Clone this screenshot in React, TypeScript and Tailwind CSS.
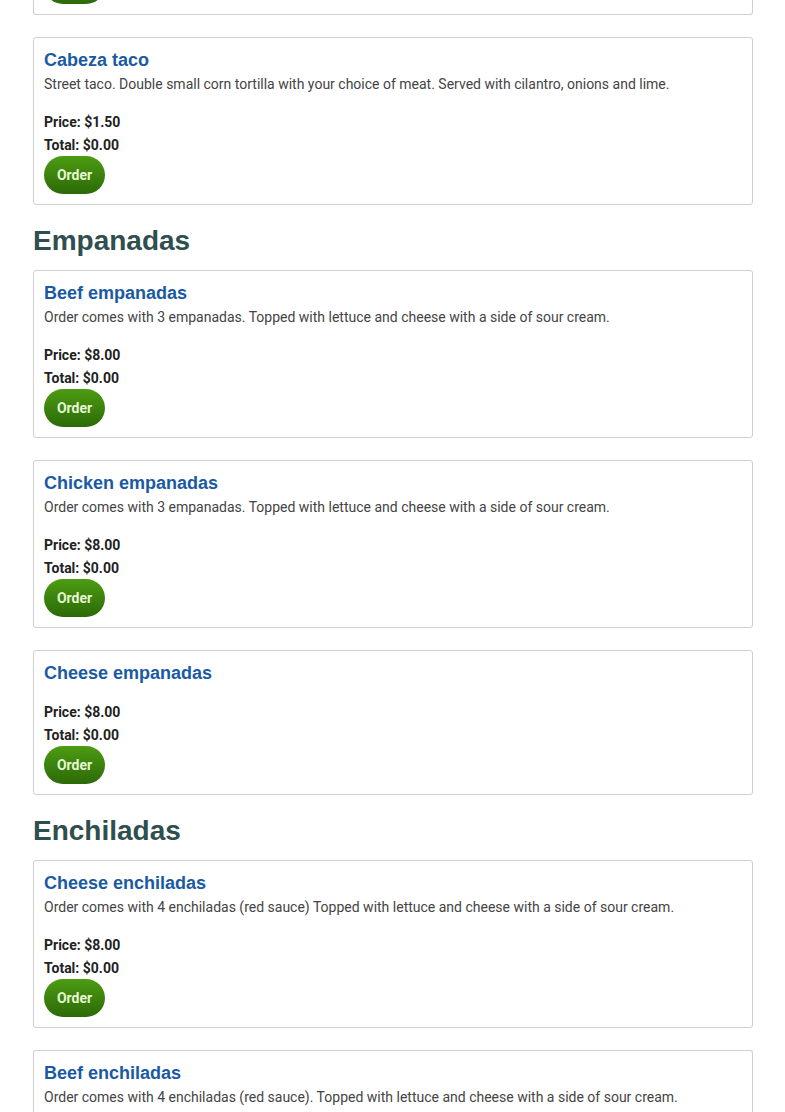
import React from "react";

type Item = { name: string; desc?: string; price: string };

function Card({ item, partial = false }: { item: Item; partial?: boolean }) {
  return (
    <div
      className={
        partial
          ? "rounded-t-[3px] border-x border-t border-[#cfcfcf] bg-white px-[10px] pb-[20px] pt-[11px]"
          : "mb-[22px] rounded-[3px] border border-[#cfcfcf] bg-white px-[10px] pb-[10px] pt-[11px]"
      }
    >
      <h3 className="text-[18px] font-bold leading-[23px] text-[#1a5aa3] [font-family:'Liberation_Sans',Arial,sans-serif]">
        {item.name}
      </h3>
      {item.desc && (
        <p className="pt-[2px] text-[14px] leading-[21px] text-[#444]">{item.desc}</p>
      )}
      {!partial && (
        <>
          <div className="mt-[16px] text-[14px] font-bold leading-[23px] text-[#222]">
            <div>Price: {item.price}</div>
            <div>Total: $0.00</div>
          </div>
          <button className="mt-[-1px] h-[38px] w-[61px] rounded-full bg-gradient-to-b from-[#4d9c12] to-[#2c6a08] text-[14px] font-bold text-[#e6f7d4]">
            Order
          </button>
        </>
      )}
    </div>
  );
}

function Heading({ children }: { children: React.ReactNode }) {
  return (
    <h2 className="mb-[15px] text-[28px] font-bold leading-[28px] text-[#2f4f4f] [font-family:'Liberation_Sans',Arial,sans-serif]">
      {children}
    </h2>
  );
}

export default function App() {
  const empDesc =
    "Order comes with 3 empanadas. Topped with lettuce and cheese with a side of sour cream.";
  return (
    <div className="h-[1112px] overflow-hidden bg-white">
      <div className="ml-[33px] w-[720px] [font-family:Roboto,'Noto_Sans',sans-serif]">
        <div className="mb-[22px] h-[15px] overflow-hidden rounded-b-[3px] border-x border-b border-[#cfcfcf] bg-white px-[10px]">
          <div className="mt-[-34px] h-[38px] w-[61px] rounded-full bg-gradient-to-b from-[#4d9c12] to-[#2c6a08]" />
        </div>
        <Card
          item={{
            name: "Cabeza taco",
            desc: "Street taco. Double small corn tortilla with your choice of meat. Served with cilantro, onions and lime.",
            price: "$1.50",
          }}
        />
        <Heading>Empanadas</Heading>
        <Card item={{ name: "Beef empanadas", desc: empDesc, price: "$8.00" }} />
        <Card item={{ name: "Chicken empanadas", desc: empDesc, price: "$8.00" }} />
        <Card item={{ name: "Cheese empanadas", price: "$8.00" }} />
        <Heading>Enchiladas</Heading>
        <Card
          item={{
            name: "Cheese enchiladas",
            desc: "Order comes with 4 enchiladas (red sauce) Topped with lettuce and cheese with a side of sour cream.",
            price: "$8.00",
          }}
        />
        <Card
          partial
          item={{
            name: "Beef enchiladas",
            desc: "Order comes with 4 enchiladas (red sauce). Topped with lettuce and cheese with a side of sour cream.",
            price: "$8.00",
          }}
        />
      </div>
    </div>
  );
}
